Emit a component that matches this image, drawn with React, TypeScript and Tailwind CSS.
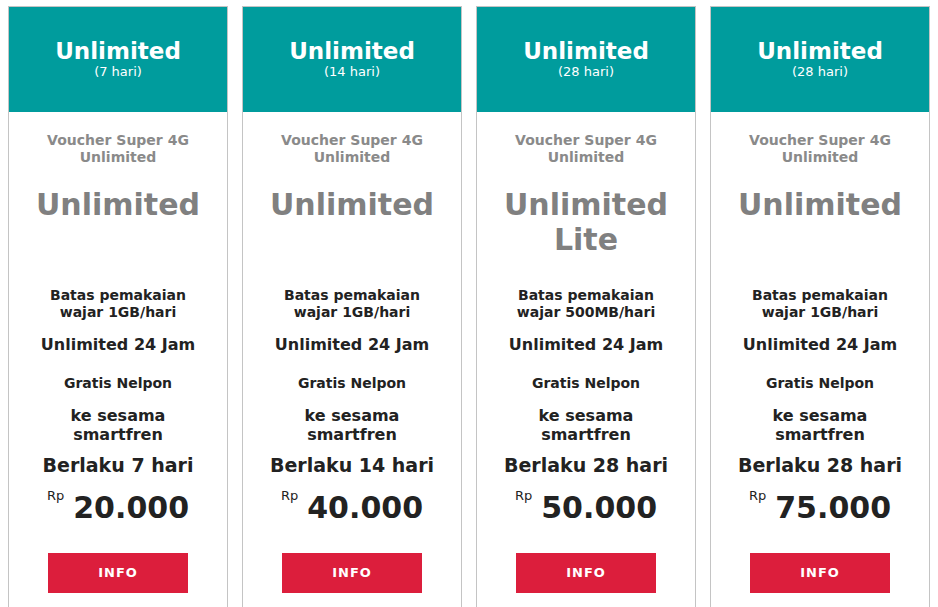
const plans = [
  { days: '7 hari', title: ['Unlimited'], quota: '1GB/hari', validity: 'Berlaku 7 hari', price: '20.000' },
  { days: '14 hari', title: ['Unlimited'], quota: '1GB/hari', validity: 'Berlaku 14 hari', price: '40.000' },
  { days: '28 hari', title: ['Unlimited', 'Lite'], quota: '500MB/hari', validity: 'Berlaku 28 hari', price: '50.000' },
  { days: '28 hari', title: ['Unlimited'], quota: '1GB/hari', validity: 'Berlaku 28 hari', price: '75.000' },
];

type Plan = (typeof plans)[number];

function PlanCard({ plan }: { plan: Plan }) {
  return (
    <div className="flex h-[640px] flex-1 flex-col border border-[#c4c4c4] bg-white">
      <div className="flex h-[105px] flex-col items-center justify-center bg-[#009c9d] pb-[2px] text-white">
        <p className="text-[23px] font-bold leading-[26px]">Unlimited</p>
        <p className="text-[13px] leading-[16px]">({plan.days})</p>
      </div>

      <div className="flex flex-col items-center px-4 text-center">
        <p className="mt-[20px] text-[14px] font-bold leading-[17px] text-[#8a8a8a]">
          Voucher Super 4G
          <br />
          Unlimited
        </p>

        <div className="mt-[21px] h-[70px] text-[30px] font-bold leading-[35px] text-[#808080]">
          {plan.title.map((line) => (
            <p key={line}>{line}</p>
          ))}
        </div>

        <p className="mt-[30px] text-[14px] font-bold leading-[17px] text-[#222]">
          Batas pemakaian
          <br />
          wajar {plan.quota}
        </p>

        <p className="mt-[14px] text-[16px] font-bold leading-[20px] text-[#222]">
          Unlimited 24 Jam
        </p>

        <p className="mt-[20px] text-[14px] font-bold leading-[17px] text-[#222]">
          Gratis Nelpon
        </p>

        <p className="mt-[14px] text-[16px] font-bold leading-[19px] text-[#222]">
          ke sesama
          <br />
          smartfren
        </p>

        <p className="mt-[9px] text-[19px] font-bold leading-[24px] text-[#222]">
          {plan.validity}
        </p>

        <div className="mt-[14px] flex items-start gap-[9px] text-[#222]">
          <span className="mt-[-3px] text-[13px] leading-[16px]">Rp</span>
          <span className="text-[30px] font-bold leading-[34px]">{plan.price}</span>
        </div>

        <button className="mt-[28px] h-[40px] w-[140px] bg-[#dc1e3c] text-[13px] font-bold tracking-[1px] text-white">
          INFO
        </button>
      </div>
    </div>
  );
}

export default function App() {
  return (
    <div
      className="h-[607px] overflow-hidden bg-white px-2 pt-[6px]"
      style={{ fontFamily: '"DejaVu Sans", Verdana, sans-serif' }}
    >
      <div className="flex gap-[14px]">
        {plans.map((plan, i) => (
          <PlanCard key={i} plan={plan} />
        ))}
      </div>
    </div>
  );
}
